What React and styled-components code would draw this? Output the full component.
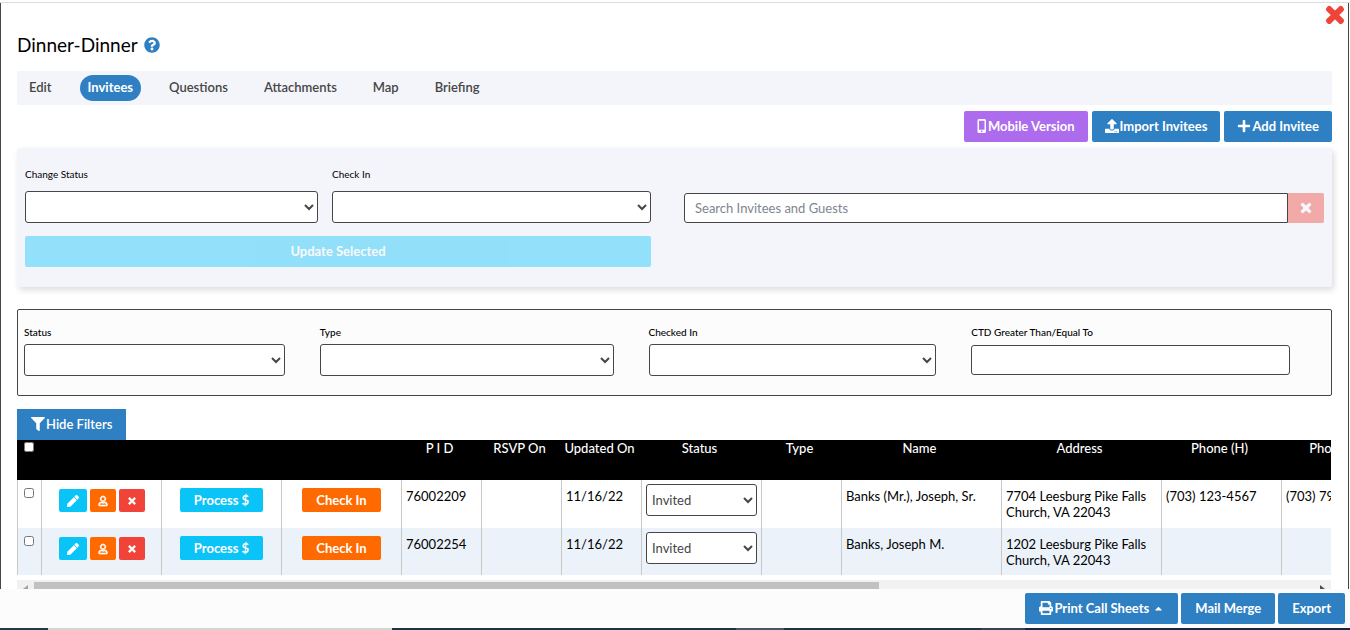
import {useState} from "react";
import styled, {createGlobalStyle, css} from "styled-components";
import {
    FaCaretUp,
    FaFilter,
    FaPen,
    FaPlus,
    FaPrint,
    FaQuestionCircle,
    FaRegUser,
    FaTimes,
    FaUpload,
} from "react-icons/fa";

const GlobalStyles = createGlobalStyle`
  :root {
    --color-blue: #2f80c3;
    --color-cyan: #0ac3f7;
    --color-orange: #ff6a00;
    --color-red: #f04438;
    --color-purple: #ad6bee;
    --color-line: #464646;
    --color-panel: #f4f5fa;
    --color-off-white: #fcfcfc;
  }

  *, *::before, *::after {
    box-sizing: border-box;
  }

  body {
    margin: 0;
    background: #fff;
    color: #000;
    font-family: Lato, "Liberation Sans", sans-serif;
    font-size: 13px;
    line-height: 16px;
  }

  button, input, select {
    font: inherit;
  }
`;

const Page = styled.div`
  display: flex;
  flex-direction: column;
  height: 100vh;
  padding-top: 2px;
  overflow: hidden;
`;

const Frame = styled.main`
  flex: 1;
  min-height: 0;
  overflow: hidden;
  margin-right: 1px;
  padding: 0 16px;
  border-left: 1px solid var(--color-line);
  border-right: 1px solid var(--color-line);
`;

const TopLine = styled.div`
  flex: none;
  height: 1px;
  background: #dcdcdc;
`;

const BoldTimes = styled(FaTimes)`
  overflow: visible;
  stroke: currentColor;
  stroke-width: 36;
  stroke-linejoin: round;
`;

const CloseButton = styled.button`
  position: absolute;
  top: 3px;
  right: 3px;
  display: flex;
  padding: 0;
  border: none;
  background: none;
  color: var(--color-red);
  font-size: 24px;
`;

const Title = styled.h1`
  display: flex;
  align-items: center;
  gap: 6px;
  margin: 0;
  padding: 30px 0 14px;
  font-size: 19px;
  font-weight: 400;
  line-height: 24px;

  svg {
    color: var(--color-blue);
    font-size: 16px;
  }
`;

const Tabs = styled.nav`
  display: flex;
  align-items: center;
  gap: 20px;
  height: 34px;
  padding: 0 4px;
  border-radius: 2px;
  background: var(--color-panel);
`;

const Tab = styled.a`
  padding: 4px 8px 6px;
  border-radius: 13px;
  color: #464646;
  font-weight: 600;
  text-decoration: none;

  ${({$active}) => $active && css`
    background: var(--color-blue);
    color: #fff;
    font-weight: 700;
  `}
`;

const Button = styled.button`
  display: inline-flex;
  align-items: center;
  justify-content: center;
  gap: 1px;
  height: 31px;
  padding: 0 13px 1px;
  border: none;
  border-radius: 2px;
  background: ${({$color = "blue"}) => `var(--color-${$color})`};
  color: #fff;
  font-weight: 700;
  white-space: nowrap;

  svg {
    font-size: 14px;
  }

  &:disabled {
    opacity: 0.42;
  }
`;

const WideButton = styled(Button)`
  padding: 0 14px 1px;
`;

const FilterButton = styled(WideButton)`
  border-radius: 0;
  font-weight: 600;
`;

const SmallButton = styled(Button)`
  height: 24px;
  padding: 0 14px;
`;

const IconButton = styled(Button)`
  height: 23px;
  padding: 0 8px;

  svg {
    font-size: ${({$size = 10}) => $size}px;
  }
`;

const Toolbar = styled.div`
  display: flex;
  justify-content: flex-end;
  gap: 4px;
  padding: 6px 0;
`;

const UpdatePanel = styled.section`
  display: grid;
  grid-template-columns: 626fr 640fr;
  column-gap: 33px;
  height: 139px;
  padding: 18px 8px 0;
  border-radius: 2px;
  background: var(--color-panel);
  box-shadow: 2px 3px 6px rgba(0, 0, 0, 0.14);
`;

const UpdateForm = styled.div`
  display: grid;
  grid-template-columns: 293fr 319fr;
  gap: 13px 14px;
  align-content: start;

  ${Button} {
    grid-column: 1 / -1;
  }
`;

const Field = styled.label`
  display: flex;
  flex-direction: column;
  gap: ${({$gap}) => $gap}px;
  font-size: 10px;
`;

const inputStyles = css`
  width: 100%;
  height: 32px;
  border: 1px solid var(--color-line);
  border-radius: 3px;
  background-color: #fff;
  color: #464646;
  font-size: 13px;
`;

const Select = styled.select`
  ${inputStyles}
  padding: 0 2px 0 1px;
`;

const Input = styled.input`
  ${inputStyles}
  height: 30px;
  padding: 0 10px;

  &::placeholder {
    color: #7d868f;
  }
`;

const Search = styled.div`
  display: flex;
  padding-top: 27px;

  ${Input} {
    flex: 1;
    border-radius: 3px 0 0 3px;
  }

  ${Button} {
    width: 36px;
    height: 30px;
    padding: 0;
    border-radius: 0 2px 2px 0;
  }
`;

const Filters = styled.section`
  display: grid;
  grid-template-columns: 261fr 294fr 288fr 319fr;
  column-gap: 35px;
  height: 87px;
  margin: 22px 0 13px;
  padding: 14px 41px 0 6px;
  border: 1px solid var(--color-line);
  border-radius: 2px;
  background: var(--color-off-white);
  font-weight: 500;

  ${Input} {
    margin-top: 1px;
  }
`;

const TableScroller = styled.div`
  overflow: hidden;
  margin-right: 1px;
`;

const Table = styled.table`
  width: 1384px;
  table-layout: fixed;
  border-collapse: separate;
  border-spacing: 0;
`;

const HeadCell = styled.th`
  height: 40px;
  padding: 0 3px 0 0;
  background: #000;
  color: #fff;
  font-weight: 500;
  text-align: center;
  vertical-align: top;
`;

const Row = styled.tr`
  height: 48px;
  background: #fff;

  &:nth-child(even) {
    height: 47px;
    background: #ebf2fa;
  }
`;

const Cell = styled.td`
  padding: ${({$control}) => ($control ? "4px 4px 0" : "8px 4px 0")};
  border-left: 1px solid #c8c8c8;
  vertical-align: top;
`;

const Actions = styled.div`
  display: flex;
  align-items: flex-end;
  justify-content: center;
  gap: 3px;
  height: 24px;
`;

const Checkbox = styled.input`
  display: block;
  width: 10px;
  height: 10px;
  margin: ${({$head}) => ($head ? "2px 0 0 7px" : "0 0 0 2px")};
`;

const Scrollbar = styled.div`
  display: flex;
  align-items: center;
  height: 17px;
  margin: 5px 1px 0 0;
  padding: 0 6px;
  background: #f1f1f1;
`;

const ScrollArrow = styled.svg`
  flex: none;
  width: 5px;
  height: 8px;
  fill: ${({$disabled}) => ($disabled ? "#a3a3a3" : "#505050")};
`;

const ScrollTrack = styled.div`
  flex: 1;
  height: 13px;
  margin: 0 6px;
`;

const ScrollThumb = styled.div`
  width: 66%;
  height: 100%;
  background: #c1c1c1;
`;

const Footer = styled.footer`
  display: flex;
  flex: none;
  justify-content: flex-end;
  gap: 3px;
  height: 39px;
  padding: 4px 5px;
  background: var(--color-off-white);
`;

const Caret = styled(FaCaretUp)`
  && {
    margin-left: 3px;
    font-size: 11px;
  }
`;

const BottomStrip = styled.div`
  display: grid;
  flex: none;
  grid-template-columns: 48fr 344fr 344fr 48fr 197fr 44fr 325fr;
  height: 2px;
  background: #1f3444;
`;

const StripPart = styled.span`
  background: ${({$color}) => $color};
`;

const TABS = ["Edit", "Invitees", "Questions", "Attachments", "Map", "Briefing"];
const STRIP = ["#1f3c44", "#d4d6d2", "#1f3444", "#465766", "#1f3444", "#324458", "#18263f"];

const COLUMNS = [
    {label: "", width: 24},
    {label: "", width: 120},
    {label: "", width: 120},
    {label: "", width: 120},
    {label: "P I D", width: 80},
    {label: "RSVP On", width: 80},
    {label: "Updated On", width: 80},
    {label: "Status", width: 120},
    {label: "Type", width: 80},
    {label: "Name", width: 160},
    {label: "Address", width: 160},
    {label: "Phone (H)", width: 120},
    {label: "Phone (W)", width: 120},
];

const INVITEES = [
    {
        pid: "76002209",
        updatedOn: "11/16/22",
        name: "Banks (Mr.), Joseph, Sr.",
        address: "7704 Leesburg Pike Falls Church, VA 22043",
        homePhone: "(703) 123-4567",
        workPhone: "(703) 798-4567",
    },
    {
        pid: "76002254",
        updatedOn: "11/16/22",
        name: "Banks, Joseph M.",
        address: "1202 Leesburg Pike Falls Church, VA 22043",
        homePhone: "",
        workPhone: "",
    },
];

const MobileIcon = () => (
    <svg width="10" height="14" viewBox="0 0 10 14" aria-hidden="true">
        <path
            fill="currentColor"
            fillRule="evenodd"
            d="M2 0h5.500A1.500 1.500 0 0 1 9 1.500v11A1.500 1.500 0 0 1 7.500 14H2A1.500 1.500 0 0 1 .5 12.500v-11A1.500 1.500 0 0 1 2 0zM2 1.700v9h5.500v-9zM4.750 11.600a.8.8 0 1 0 0 1.600.8.8 0 0 0 0-1.600z"
        />
    </svg>
);

const UserIcon = styled(FaRegUser)`
  overflow: visible;
  stroke: currentColor;
  stroke-width: 36;
`;

const SelectField = ({label, gap}) => (
    <Field $gap={gap}>
        {label}
        <Select/>
    </Field>
);

const InviteeRow = ({invitee}) => {
    const {pid, updatedOn, name, address, homePhone, workPhone} = invitee;

    return (
        <Row>
            <Cell><Checkbox type="checkbox" aria-label={`Select ${name}`}/></Cell>
            <Cell>
                <Actions>
                    <IconButton $color="cyan" $size={12} aria-label="Edit"><FaPen/></IconButton>
                    <IconButton $color="orange" aria-label="Profile"><UserIcon/></IconButton>
                    <IconButton $color="red" aria-label="Remove"><BoldTimes/></IconButton>
                </Actions>
            </Cell>
            <Cell><Actions><SmallButton $color="cyan">Process $</SmallButton></Actions></Cell>
            <Cell><Actions><SmallButton $color="orange">Check In</SmallButton></Actions></Cell>
            <Cell>{pid}</Cell>
            <Cell/>
            <Cell>{updatedOn}</Cell>
            <Cell $control>
                <Select aria-label="Status" defaultValue="Invited">
                    <option>Invited</option>
                </Select>
            </Cell>
            <Cell/>
            <Cell>{name}</Cell>
            <Cell>{address}</Cell>
            <Cell>{homePhone}</Cell>
            <Cell>{workPhone}</Cell>
        </Row>
    );
};

const App = () => {
    const [activeTab, setActiveTab] = useState("Invitees");
    const [showFilters, setShowFilters] = useState(true);

    return (
        <>
            <GlobalStyles/>
            <Page>
                <TopLine/>
                <Frame>
                    <CloseButton aria-label="Close"><BoldTimes/></CloseButton>
                    <Title>Dinner-Dinner <FaQuestionCircle/></Title>

                    <Tabs>
                        {TABS.map((tab) => (
                            <Tab key={tab} href="#" $active={tab === activeTab} onClick={() => setActiveTab(tab)}>
                                {tab}
                            </Tab>
                        ))}
                    </Tabs>

                    <Toolbar>
                        <Button $color="purple"><MobileIcon/>Mobile Version</Button>
                        <Button><FaUpload/>Import Invitees</Button>
                        <Button><FaPlus/>Add Invitee</Button>
                    </Toolbar>

                    <UpdatePanel>
                        <UpdateForm>
                            <SelectField label="Change Status" gap={9}/>
                            <SelectField label="Check In" gap={9}/>
                            <Button $color="cyan" disabled>Update Selected</Button>
                        </UpdateForm>
                        <Search>
                            <Input placeholder="Search Invitees and Guests" aria-label="Search Invitees and Guests"/>
                            <Button $color="red" disabled aria-label="Clear search"><BoldTimes/></Button>
                        </Search>
                    </UpdatePanel>

                    {showFilters && (
                        <Filters>
                            <SelectField label="Status" gap={4}/>
                            <SelectField label="Type" gap={4}/>
                            <SelectField label="Checked In" gap={4}/>
                            <Field $gap={4}>
                                CTD Greater Than/Equal To
                                <Input/>
                            </Field>
                        </Filters>
                    )}

                    <FilterButton onClick={() => setShowFilters(!showFilters)}>
                        <FaFilter/>Hide Filters
                    </FilterButton>

                    <TableScroller>
                        <Table>
                            <colgroup>
                                {COLUMNS.map(({width}, i) => <col key={i} width={width}/>)}
                            </colgroup>
                            <thead>
                                <tr>
                                    {COLUMNS.map(({label}, i) => (
                                        <HeadCell key={i}>
                                            {i === 0 ? <Checkbox $head type="checkbox" aria-label="Select all"/> : label}
                                        </HeadCell>
                                    ))}
                                </tr>
                            </thead>
                            <tbody>
                                {INVITEES.map((invitee) => <InviteeRow key={invitee.pid} invitee={invitee}/>)}
                            </tbody>
                        </Table>
                    </TableScroller>
                    <Scrollbar>
                        <ScrollArrow $disabled viewBox="0 0 5 8"><path d="M5 0v8L0 4z"/></ScrollArrow>
                        <ScrollTrack><ScrollThumb/></ScrollTrack>
                        <ScrollArrow viewBox="0 0 5 8"><path d="M0 0v8l5-4z"/></ScrollArrow>
                    </Scrollbar>
                </Frame>

                <Footer>
                    <WideButton><FaPrint/>Print Call Sheets <Caret/></WideButton>
                    <WideButton>Mail Merge</WideButton>
                    <WideButton>Export</WideButton>
                </Footer>
                <BottomStrip>
                    {STRIP.map((color, i) => <StripPart key={i} $color={color}/>)}
                </BottomStrip>
            </Page>
        </>
    );
};

export default App;
